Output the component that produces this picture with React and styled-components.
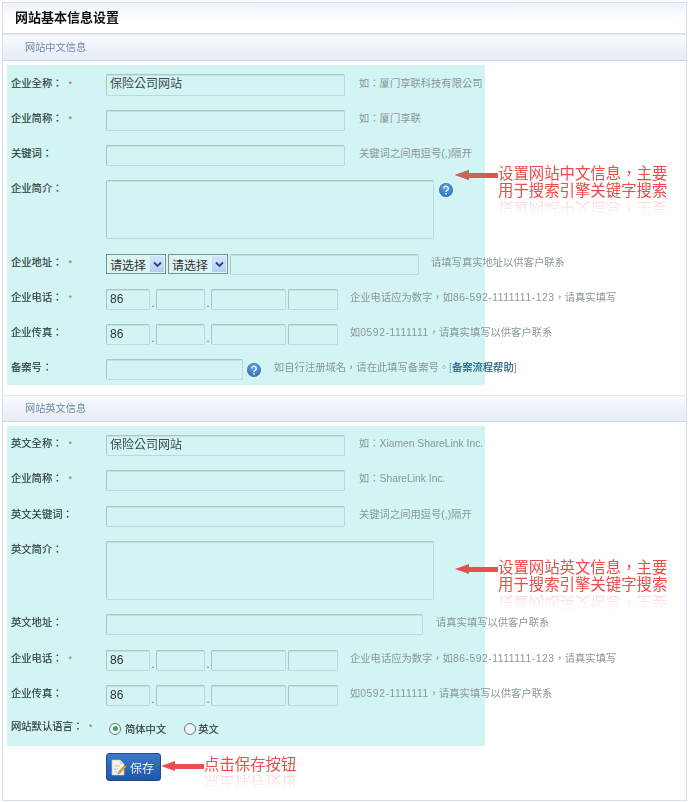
import React from "react";
import styled, { createGlobalStyle } from "styled-components";

const GlobalStyle = createGlobalStyle`
    html, body {
        margin: 0;
        padding: 0;
        background: #fff;
        font-family: "Liberation Sans", "Noto Sans CJK TC", sans-serif;
    }
`;

const StyledFrame = styled.div`
    box-sizing: border-box;
    width: 685px;
    height: 799px;
    margin: 2px 0 0 2px;
    border: 1px solid #d6dfee;
    overflow: hidden;
    filter: blur(0.3px);
`;

const StyledTitleBar = styled.div`
    box-sizing: border-box;
    height: 31px;
    padding: 6px 0 0 12px;
    font-size: 13px;
    font-weight: bold;
    line-height: 18px;
    color: #111;
    background: linear-gradient(#eff3fa, #fff 60%);
    border-bottom: 1px solid #d5dde6;
`;

const StyledSectionBar = styled.div`
    box-sizing: border-box;
    height: 27px;
    padding-left: 22px;
    font-size: 10.2px;
    line-height: 25px;
    color: #7389a6;
    background: linear-gradient(#f8fafe, #e6ecf6);
    border-bottom: 1px solid #cdd7e8;
    border-top: 1px solid #e4e8ee;
    margin-top: ${(p) => p.$top || 0}px;
`;

const StyledPanel = styled.div`
    position: relative;
    box-sizing: border-box;
    width: 478px;
    height: 320px;
    margin: 4px 0 0 4px;
    padding: 9px 0 0 4px;
    display: flex;
    flex-direction: column;
    gap: 14px;
    background: #d2f4f3;
`;

const StyledRow = styled.div`
    display: flex;
    align-items: ${(p) => (p.$top ? "flex-start" : "center")};
    height: ${(p) => p.$height || 21}px;
    white-space: nowrap;
`;

const StyledLabel = styled.div`
    flex: none;
    width: 95px;
    display: flex;
    font-size: 10.3px;
    line-height: 14px;
    color: #2c3a3a;
    -webkit-text-stroke: 0.15px #2c3a3a;
    padding-bottom: 3px;
    margin-top: ${(p) => (p.$top ? "2px" : "0")};
`;

const StyledStar = styled.span`
    color: #b06060;
    font-size: 9px;
    -webkit-text-stroke: 0;
    margin-left: ${(p) => p.$gap || 6}px;
`;

const StyledField = styled.div`
    flex: none;
    box-sizing: border-box;
    width: ${(p) => p.$width}px;
    height: ${(p) => p.$height || 21}px;
    margin-left: ${(p) => p.$left || 0}px;
    padding-left: 3px;
    font-size: 12px;
    line-height: 19px;
    color: #3a4a4a;
    border: 1px solid #bbd9d8;
    border-top-color: #a7c6c4;
    border-left-color: #a7c6c4;
    border-radius: 2px;
    box-shadow: inset 0 1px 0 #c3e1df;
`;

const StyledPhoneCode = styled(StyledField)`
    font-size: 12px;
    color: #333;
`;

const StyledDot = styled.span`
    flex: none;
    width: 6px;
    height: 21px;
    text-align: center;
    font-size: 11px;
    line-height: 28px;
    color: #555;
`;

const StyledHint = styled.span`
    margin-left: ${(p) => p.$left}px;
    padding-bottom: 3px;
    font-size: 10.3px;
    line-height: 14px;
    color: #8b9696;
`;

const StyledDigits = styled.span`
    letter-spacing: 0.55px;
`;

const StyledHelpLink = styled.span`
    color: #1f5f80;
    -webkit-text-stroke: 0.2px #1f5f80;
`;

const StyledSelect = styled.div`
    flex: none;
    box-sizing: border-box;
    width: 60px;
    height: 20px;
    margin-right: 2px;
    padding: 0 0 0 3px;
    display: flex;
    align-items: center;
    justify-content: space-between;
    font-size: 12px;
    color: #333;
    border: 1px solid #7d9090;
    background: #dcf5f4;
`;

const StyledSelectArrow = styled.span`
    display: flex;
    align-items: center;
    justify-content: center;
    width: 14px;
    height: 16px;
    margin-right: 1px;
    background: linear-gradient(#d4e6f8, #b0cff0);
`;

const StyledRadioLabel = styled.label`
    display: flex;
    align-items: center;
    gap: ${(p) => p.$gap}px;
    margin: 0 18px 0 ${(p) => p.$left || 0}px;
    font-size: 10.3px;
    color: #2c3a3a;
    -webkit-text-stroke: 0.15px #2c3a3a;
`;

const StyledRadio = styled.span`
    box-sizing: border-box;
    display: flex;
    align-items: center;
    justify-content: center;
    width: 12px;
    height: 12px;
    border: 1px solid #6b7a80;
    border-radius: 50%;
    background: #eef9f8;
    &::after {
        content: "";
        display: ${(p) => (p.$checked ? "block" : "none")};
        width: 5px;
        height: 5px;
        border-radius: 50%;
        background: #3aa55a;
    }
`;

const StyledNote = styled.div`
    position: absolute;
    left: 448px;
    top: ${(p) => p.$top}px;
    display: flex;
    align-items: flex-start;
`;

const StyledArrow = styled.svg`
    flex: none;
    margin-top: ${(p) => p.$top}px;
`;

const StyledNoteText = styled.div`
    font-size: 15.4px;
    line-height: 16.5px;
    color: #ee4a4a;
    white-space: nowrap;
`;

const StyledReflection = styled.div`
    height: 16px;
    margin-top: 1px;
    transform: scaleY(-1);
    opacity: 0.25;
    -webkit-mask-image: linear-gradient(to top, #000, transparent);
    mask-image: linear-gradient(to top, #000, transparent);
    line-height: 16px;
`;

const StyledFooter = styled.div`
    display: flex;
    align-items: flex-start;
    margin: 7px 0 0 103px;
`;

const StyledSaveButton = styled.button`
    flex: none;
    box-sizing: border-box;
    width: 55px;
    height: 28px;
    padding: 0 0 0 4px;
    display: flex;
    align-items: center;
    gap: 3px;
    font-family: inherit;
    font-size: 12px;
    color: #e8f1fa;
    border: 1px solid #1c4a94;
    border-radius: 3px;
    background: linear-gradient(#3f78c8, #1f56a8);
`;

const StyledFooterText = styled(StyledNoteText)`
    margin-top: 4px;
    line-height: 16px;
`;

const HelpIcon = ({ left, top = 0 }) => (
    <svg
        width="14"
        height="14"
        viewBox="0 0 14 14"
        style={{ flex: "none", marginLeft: left, marginTop: top }}
    >
        <defs>
            <radialGradient id="helpFill" cx="50%" cy="30%" r="70%">
                <stop offset="0" stopColor="#66a6e4" />
                <stop offset="1" stopColor="#2f72c0" />
            </radialGradient>
        </defs>
        <circle cx="7" cy="7" r="6.7" fill="url(#helpFill)" stroke="#2a62a8" strokeWidth="0.6" />
        <path
            d="M4.7 5.4a2.3 2.2 0 1 1 3.5 1.9c-.8.5-1.2.8-1.2 1.6"
            fill="none"
            stroke="#fff"
            strokeWidth="1.3"
        />
        <circle cx="7" cy="10.8" r="0.9" fill="#fff" />
    </svg>
);

const ChevronIcon = () => (
    <svg width="9" height="7" viewBox="0 0 9 7">
        <path d="M1 1.5l3.5 3.5L8 1.5" fill="none" stroke="#26488c" strokeWidth="1.8" />
    </svg>
);

const SaveIcon = () => (
    <svg width="16" height="18" viewBox="0 0 16 18" style={{ flex: "none" }}>
        <path d="M1 2h8l4 4v11H1z" fill="#f2f2ea" stroke="#c9c9b8" strokeWidth="0.6" />
        <path d="M9 2v4h4" fill="#d5d5c8" />
        <path d="M3 8h6M3 11h4M3 14h3" stroke="#b9b9ac" strokeWidth="0.8" />
        <path d="M14 7l1.6 1.5-6.4 6.6-2.4 1 .9-2.6z" fill="#e0a23c" stroke="#8a6020" strokeWidth="0.4" />
    </svg>
);

// the arrow's part that lies over the teal panel looks duller in the reference
const Arrow = ({ top, duller }) => (
    <StyledArrow $top={top} width="43" height="12" viewBox="0 0 43 12">
        <path d="M0 6L14 1v3h29v5H14v2z" fill="#e8504f" />
        {duller && <path d="M0 6L14 1v3h16v5H14v2z" fill="#c66460" />}
    </StyledArrow>
);

const Note = ({ top, lines, duller }) => (
    <StyledNote $top={top}>
        <Arrow top={3} duller={duller} />
        <StyledNoteText>
            <div>{lines[0]}</div>
            <div>{lines[1]}</div>
            <StyledReflection aria-hidden="true">{lines[0]}</StyledReflection>
        </StyledNoteText>
    </StyledNote>
);

const Label = ({ text, star, top }) => (
    <StyledLabel $top={top}>
        {text}
        {star && <StyledStar>*</StyledStar>}
    </StyledLabel>
);

const PhoneFields = () => (
    <>
        <StyledPhoneCode $width={44}>86</StyledPhoneCode>
        <StyledDot>.</StyledDot>
        <StyledField $width={49} />
        <StyledDot>.</StyledDot>
        <StyledField $width={75} />
        <StyledField $width={50} $left={2} />
    </>
);

const PhoneHint = () => (
    <StyledHint $left={12}>
        企业电话应为数字，如<StyledDigits>86-592-1111111-123</StyledDigits>，请真实填写
    </StyledHint>
);

const FaxHint = () => (
    <StyledHint $left={12}>
        如<StyledDigits>0592-1111111</StyledDigits>，请真实填写以供客户联系
    </StyledHint>
);

const App = () => (
    <>
        <GlobalStyle />
        <StyledFrame>
            <StyledTitleBar>网站基本信息设置</StyledTitleBar>
            <StyledSectionBar>网站中文信息</StyledSectionBar>
            <StyledPanel>
                <StyledRow $height={22}>
                    <Label text="企业全称：" star />
                    <StyledField $width={239} $height={22}>保险公司网站</StyledField>
                    <StyledHint $left={14}>如：厦门享联科技有限公司</StyledHint>
                </StyledRow>
                <StyledRow>
                    <Label text="企业简称：" star />
                    <StyledField $width={239} />
                    <StyledHint $left={14}>如：厦门享联</StyledHint>
                </StyledRow>
                <StyledRow>
                    <Label text="关键词：" />
                    <StyledField $width={239} />
                    <StyledHint $left={14}>关键词之间用逗号(,)隔开</StyledHint>
                </StyledRow>
                <StyledRow $height={59} $top>
                    <Label text="企业简介：" top />
                    <StyledField $width={328} $height={59} />
                    <HelpIcon left={5} top={3} />
                </StyledRow>
                <StyledRow $height={22}>
                    <Label text="企业地址：" star />
                    <StyledSelect>请选择<StyledSelectArrow><ChevronIcon /></StyledSelectArrow></StyledSelect>
                    <StyledSelect>请选择<StyledSelectArrow><ChevronIcon /></StyledSelectArrow></StyledSelect>
                    <StyledField $width={189} />
                    <StyledHint $left={12}>请填写真实地址以供客户联系</StyledHint>
                </StyledRow>
                <StyledRow>
                    <Label text="企业电话：" star />
                    <PhoneFields />
                    <PhoneHint />
                </StyledRow>
                <StyledRow>
                    <Label text="企业传真：" />
                    <PhoneFields />
                    <FaxHint />
                </StyledRow>
                <StyledRow>
                    <Label text="备案号：" />
                    <StyledField $width={137} />
                    <HelpIcon left={4} />
                    <StyledHint $left={13}>
                        如自行注册域名，请在此填写备案号。[<StyledHelpLink>备案流程帮助</StyledHelpLink>]
                    </StyledHint>
                </StyledRow>
                <Note top={101} duller lines={["设置网站中文信息，主要", "用于搜索引擎关键字搜索"]} />
            </StyledPanel>

            <StyledSectionBar $top={10}>网站英文信息</StyledSectionBar>
            <StyledPanel>
                <StyledRow>
                    <Label text="英文全称：" star />
                    <StyledField $width={239}>保险公司网站</StyledField>
                    <StyledHint $left={14}>如：Xiamen ShareLink Inc.</StyledHint>
                </StyledRow>
                <StyledRow>
                    <Label text="企业简称：" star />
                    <StyledField $width={239} />
                    <StyledHint $left={14}>如：ShareLink Inc.</StyledHint>
                </StyledRow>
                <StyledRow $height={22}>
                    <Label text="英文关键词：" />
                    <StyledField $width={239} />
                    <StyledHint $left={14}>关键词之间用逗号(,)隔开</StyledHint>
                </StyledRow>
                <StyledRow $height={59} $top>
                    <Label text="英文简介：" top />
                    <StyledField $width={328} $height={59} />
                </StyledRow>
                <StyledRow>
                    <Label text="英文地址：" />
                    <StyledField $width={317} />
                    <StyledHint $left={13}>请真实填写以供客户联系</StyledHint>
                </StyledRow>
                <StyledRow $height={22}>
                    <Label text="企业电话：" star />
                    <PhoneFields />
                    <PhoneHint />
                </StyledRow>
                <StyledRow>
                    <Label text="企业传真：" />
                    <PhoneFields />
                    <FaxHint />
                </StyledRow>
                <StyledRow $height={17}>
                    <Label text="网站默认语言：" star />
                    <StyledRadioLabel $gap={4} $left={3}>
                        <StyledRadio $checked />
                        简体中文
                    </StyledRadioLabel>
                    <StyledRadioLabel $gap={2}>
                        <StyledRadio />
                        英文
                    </StyledRadioLabel>
                </StyledRow>
                <Note top={134} lines={["设置网站英文信息，主要", "用于搜索引擎关键字搜索"]} />
            </StyledPanel>

            <StyledFooter>
                <StyledSaveButton type="button">
                    <SaveIcon />
                    保存
                </StyledSaveButton>
                <Arrow top={7} />
                <StyledFooterText>
                    点击保存按钮
                    <StyledReflection aria-hidden="true">点击保存按钮</StyledReflection>
                </StyledFooterText>
            </StyledFooter>
        </StyledFrame>
    </>
);

export default App;
